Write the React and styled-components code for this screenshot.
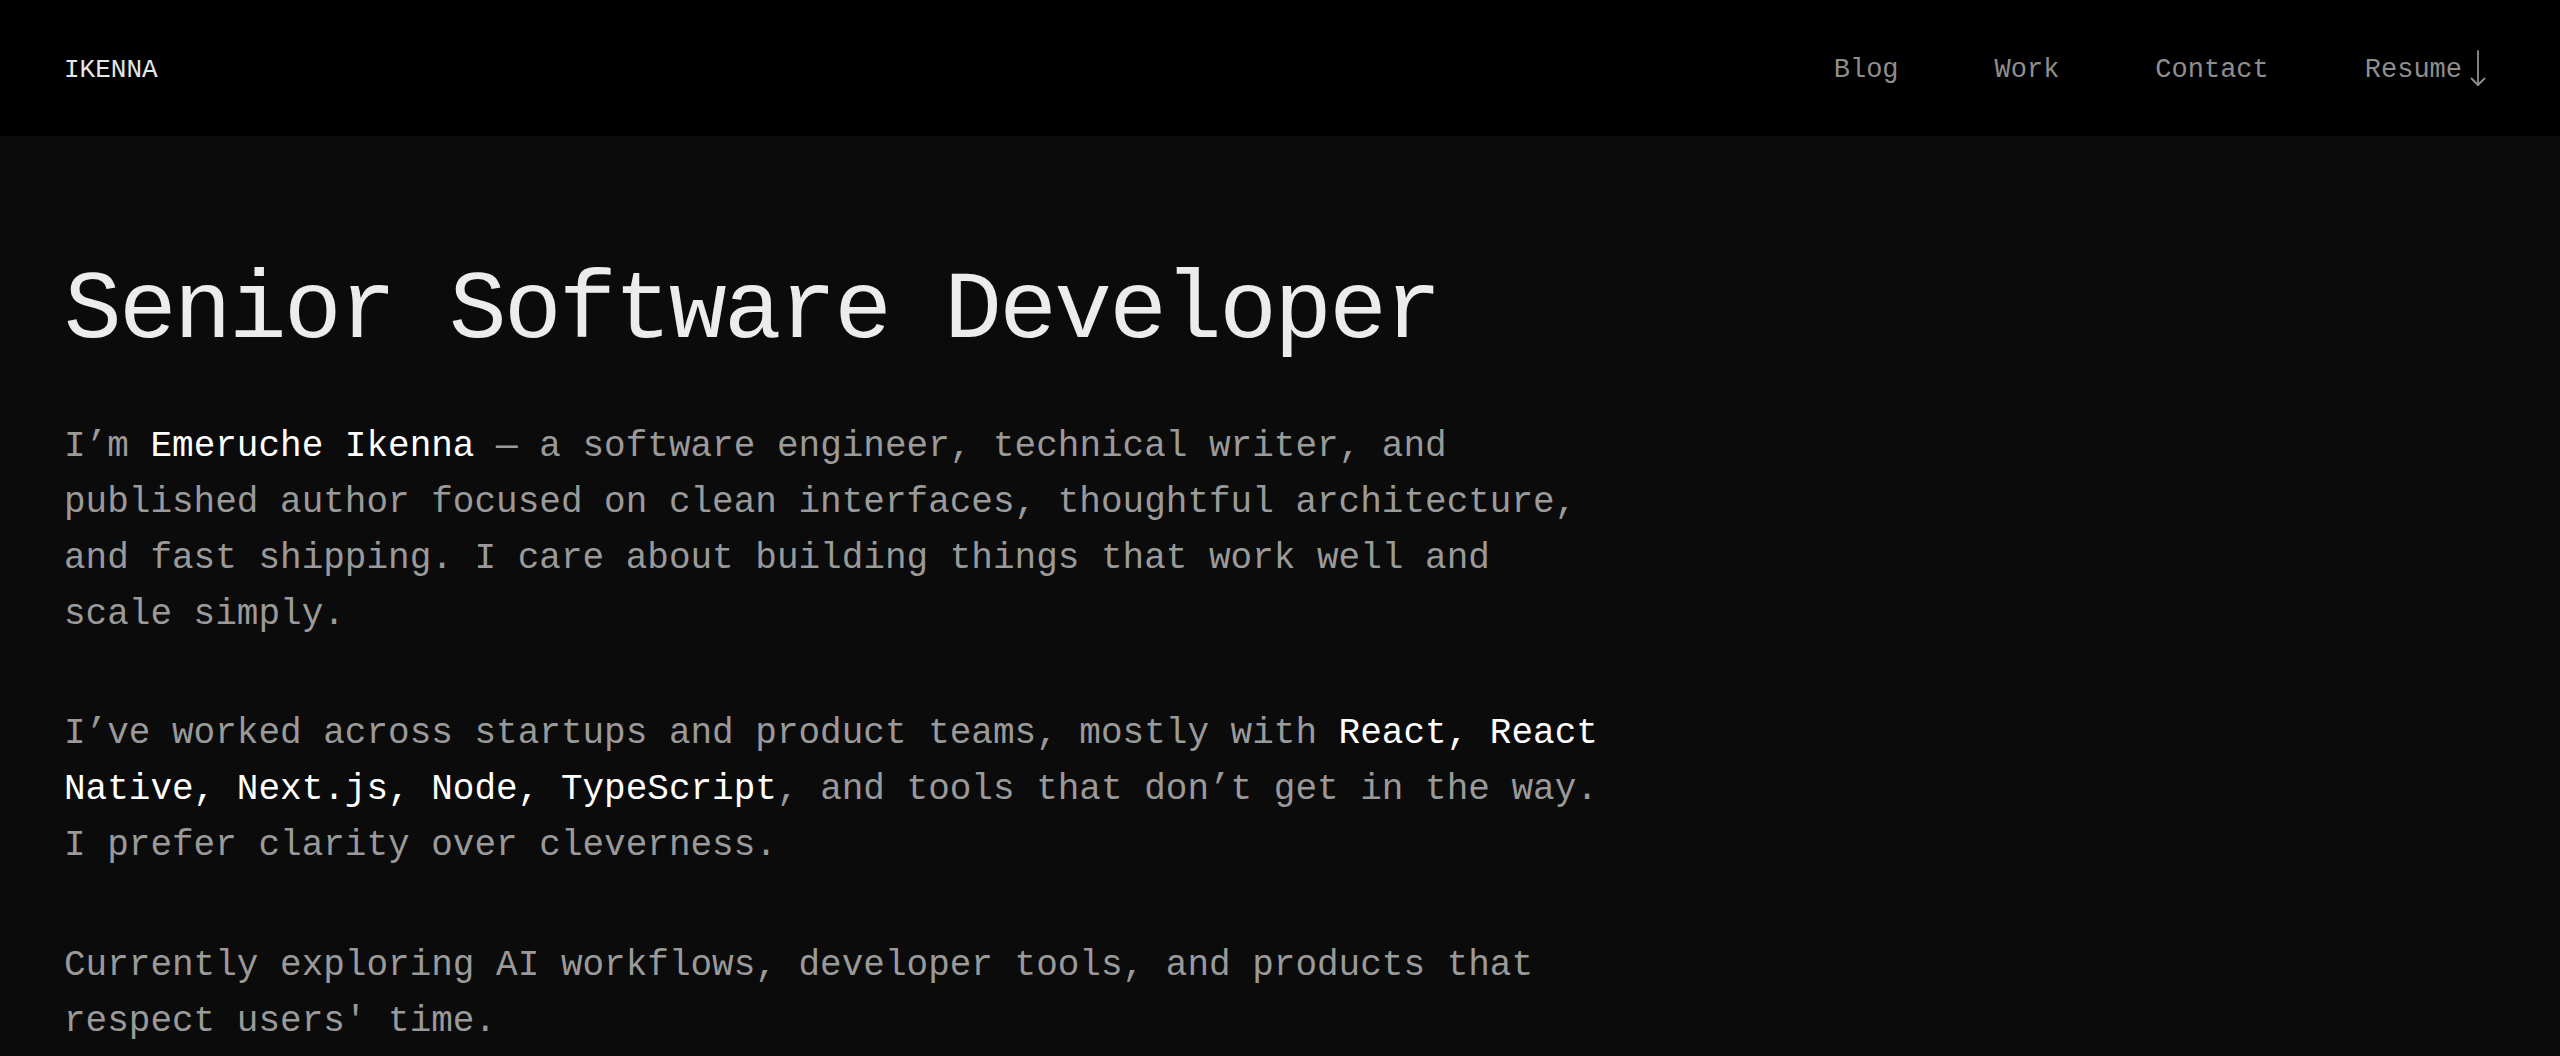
import React from "react";
import styled, { createGlobalStyle } from "styled-components";

const GlobalStyle = createGlobalStyle`
  html, body {
    margin: 0;
    padding: 0;
    background: #0b0b0b;
  }
  body {
    font-family: "Liberation Mono", "DejaVu Sans Mono", monospace;
    -webkit-font-smoothing: antialiased;
  }
  * { box-sizing: border-box; }
`;

const Page = styled.div`
  min-height: 100vh;
  background: #0b0b0b;
`;

const Header = styled.header`
  height: 136px;
  background: #000;
  display: flex;
  align-items: center;
  justify-content: space-between;
  padding: 3px 70px 0 64px;
`;

const Logo = styled.a`
  font-size: 26px;
  color: #e6e6e6;
  text-decoration: none;
`;

const Nav = styled.nav`
  display: flex;
  align-items: center;
  gap: 96px;
`;

const NavLink = styled.a`
  display: flex;
  align-items: center;
  font-size: 27px;
  color: #8e8e8e;
  text-decoration: none;
`;

const ArrowIcon = styled.svg`
  width: 24px;
  height: 36px;
  margin-left: 4px;
  margin-top: -4px;
  flex-shrink: 0;
`;

const Main = styled.main`
  padding: 118px 64px 0;
`;

const Title = styled.h1`
  margin: 0 0 50px;
  font-size: 96px;
  line-height: 1.2;
  letter-spacing: -2.6px;
  font-weight: 400;
  color: #ececec;
`;

const Paragraph = styled.p`
  margin: 0 0 64px;
  max-width: 1555px;
  font-size: 36px;
  line-height: 55.8px;
  color: #9a9a9a;
`;

const Strong = styled.span`
  color: #ffffff;
`;

export default function App() {
  return (
    <>
      <GlobalStyle />
      <Page>
        <Header>
          <Logo href="#">IKENNA</Logo>
          <Nav>
            <NavLink href="#">Blog</NavLink>
            <NavLink href="#">Work</NavLink>
            <NavLink href="#">Contact</NavLink>
            <NavLink href="#">
              Resume
              <ArrowIcon viewBox="0 0 24 36" fill="none" stroke="#8e8e8e" strokeWidth="1.8" strokeLinecap="round" strokeLinejoin="round">
                <path d="M12 1 V35" />
                <path d="M5.5 28.5 L12 35 L18.5 28.5" />
              </ArrowIcon>
            </NavLink>
          </Nav>
        </Header>
        <Main>
          <Title>Senior Software Developer</Title>
          <Paragraph>
            I’m <Strong>Emeruche Ikenna</Strong> — a software engineer, technical writer, and published author focused on clean interfaces, thoughtful architecture, and fast shipping. I care about building things that work well and scale simply.
          </Paragraph>
          <Paragraph>
            I’ve worked across startups and product teams, mostly with <Strong>React, React Native, Next.js, Node, TypeScript</Strong>, and tools that don’t get in the way. I prefer clarity over cleverness.
          </Paragraph>
          <Paragraph>
            Currently exploring AI workflows, developer tools, and products that respect users' time.
          </Paragraph>
        </Main>
      </Page>
    </>
  );
}
